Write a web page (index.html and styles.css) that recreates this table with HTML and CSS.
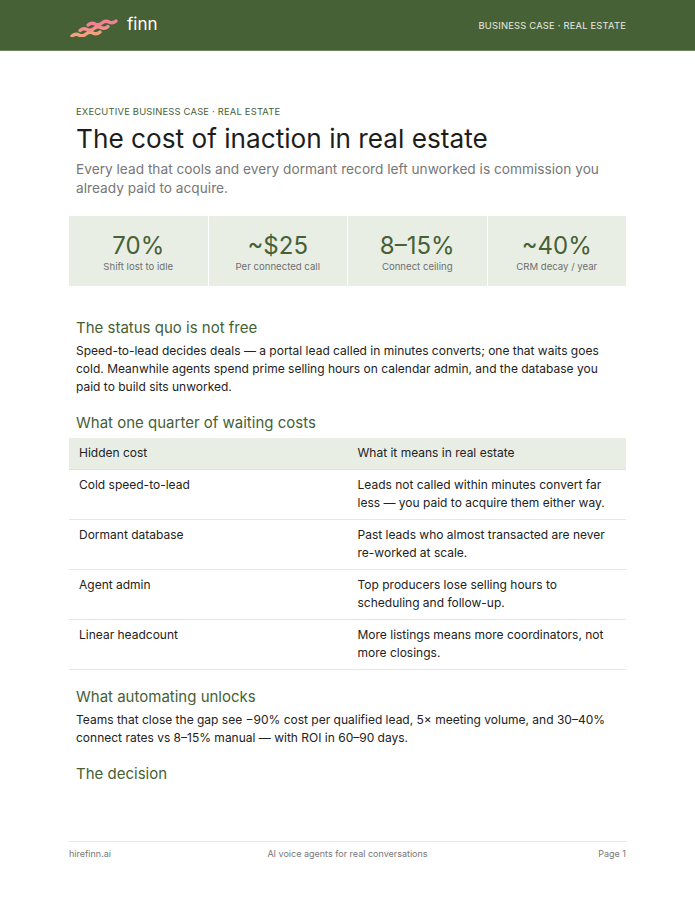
FILE: index.html
```html
<!DOCTYPE html>
<html lang="en">
<head>
<meta charset="utf-8">
<title>The cost of inaction in real estate</title>
<link rel="stylesheet" href="styles.css">
</head>
<body>
<header class="topbar">
  <div class="topbar-inner">
    <div class="brand">
      <svg class="logo" width="54" height="22" viewBox="0 0 54 22" aria-hidden="true">
        <g fill="none" stroke-width="3.4" stroke-linecap="round" stroke-linejoin="round">
          <path stroke="#f3a07f" d="M3 21 q3.5 -3 7 -1 t7 -1 t7 -1 t7 -1"/>
          <path stroke="#f48f8d" d="M11 15.5 q3.5 -3 7 -1 t7 -1 t7 -1 t7 -1"/>
          <path stroke="#f28195" d="M19 10 q3.5 -3 7 -1 t7 -1 t7 -1 t7 -1"/>
        </g>
      </svg>
      <span class="brand-name">finn</span>
    </div>
    <div class="topbar-tag">BUSINESS CASE · REAL ESTATE</div>
  </div>
</header>

<main class="page">
  <p class="eyebrow">EXECUTIVE BUSINESS CASE · REAL ESTATE</p>
  <h1 class="title">The cost of inaction in real estate</h1>
  <p class="lede">Every lead that cools and every dormant record left unworked is commission you already paid to acquire.</p>

  <section class="stats">
    <div class="stat"><div class="stat-num">70%</div><div class="stat-label">Shift lost to idle</div></div>
    <div class="stat"><div class="stat-num">~$25</div><div class="stat-label">Per connected call</div></div>
    <div class="stat"><div class="stat-num">8–15%</div><div class="stat-label">Connect ceiling</div></div>
    <div class="stat"><div class="stat-num">~40%</div><div class="stat-label">CRM decay / year</div></div>
  </section>

  <h2 class="section-title">The status quo is not free</h2>
  <p class="body">Speed-to-lead decides deals — a portal lead called in minutes converts; one that waits goes cold. Meanwhile agents spend prime selling hours on calendar admin, and the database you paid to build sits unworked.</p>

  <h2 class="section-title">What one quarter of waiting costs</h2>
  <table class="costs">
    <thead>
      <tr><th>Hidden cost</th><th>What it means in real estate</th></tr>
    </thead>
    <tbody>
      <tr><td>Cold speed-to-lead</td><td>Leads not called within minutes convert far less — you paid to acquire them either way.</td></tr>
      <tr><td>Dormant database</td><td>Past leads who almost transacted are never re-worked at scale.</td></tr>
      <tr><td>Agent admin</td><td>Top producers lose selling hours to scheduling and follow-up.</td></tr>
      <tr><td>Linear headcount</td><td>More listings means more coordinators, not more closings.</td></tr>
    </tbody>
  </table>

  <h2 class="section-title">What automating unlocks</h2>
  <p class="body">Teams that close the gap see −90% cost per qualified lead, 5× meeting volume, and 30–40% connect rates vs 8–15% manual — with ROI in 60–90 days.</p>

  <h2 class="section-title">The decision</h2>
</main>

<footer class="footer">
  <span class="footer-left">hirefinn.ai</span>
  <span class="footer-mid">AI voice agents for real conversations</span>
  <span class="footer-right">Page 1</span>
</footer>
</body>
</html>
```

FILE: styles.css
```css
* { box-sizing: border-box; }

html, body {
  margin: 0;
  padding: 0;
  background: #ffffff;
}

body {
  font-family: Inter, "Noto Sans", "Liberation Sans", sans-serif;
  color: #222222;
  width: 695px;
  height: 900px;
  display: flex;
  flex-direction: column;
}

.topbar {
  background: #466136;
  border-bottom: 1px solid #6d8460;
  height: 51px;
}

.topbar-inner {
  width: 557px;
  margin: 0 auto;
  height: 50px;
  display: flex;
  align-items: center;
  justify-content: space-between;
}

.brand {
  display: flex;
  align-items: center;
  gap: 4px;
}

.logo {
  display: block;
  margin-top: 1px;
}

.brand-name {
  color: #ffffff;
  font-size: 17px;
  font-weight: 400;
  margin-top: -3px;
}

.topbar-tag {
  color: #e6ebe2;
  font-size: 9.4px;
  letter-spacing: 0.2px;
}

.page {
  width: 557px;
  margin: 0 auto;
  padding-top: 55px;
  flex: 1;
}

.eyebrow {
  margin: 0 7px;
  font-size: 9.4px;
  letter-spacing: 0.2px;
  color: #466136;
  line-height: 12px;
}

.title {
  margin: 4px 7px 0;
  font-size: 26.2px;
  font-weight: 400;
  color: #1d1d1d;
  line-height: 34px;
}

.lede {
  margin: 4px 7px 0;
  font-size: 13.7px;
  line-height: 19px;
  color: #777777;
}

.stats {
  margin-top: 18px;
  margin-bottom: 33px;
  display: grid;
  grid-template-columns: repeat(4, 1fr);
  gap: 1px;
  background: #ffffff;
}

.stat {
  background: #e9eee5;
  height: 70px;
  display: flex;
  flex-direction: column;
  align-items: center;
  justify-content: center;
  padding-top: 3px;
}

.stat-num {
  font-size: 24px;
  color: #466136;
  line-height: 26px;
}

.stat-label {
  font-size: 9.6px;
  color: #6e6e6e;
  line-height: 13px;
  margin-top: 1px;
}

.section-title {
  margin: 18px 7px 0;
  font-size: 15px;
  font-weight: 400;
  color: #466136;
  line-height: 18px;
}

.body {
  margin: 5px 7px 0;
  font-size: 12px;
  line-height: 18px;
  color: #222222;
}

.costs {
  width: 100%;
  border-collapse: collapse;
  margin-top: 6px;
  font-size: 12px;
  table-layout: fixed;
}

.costs th,
.costs td {
  text-align: left;
  vertical-align: top;
  width: 50%;
  padding: 6px 10px;
  line-height: 18px;
}

.costs th {
  background: #e9eee5;
  font-weight: 400;
  color: #222222;
  padding-top: 6px;
  padding-bottom: 7px;
  border-bottom: 1px solid #dde3d8;
}

.costs td {
  border-bottom: 1px solid #e6e6e6;
  padding-bottom: 7px;
  height: 50px;
}

.footer {
  width: 557px;
  margin: 0 auto 40px;
  border-top: 1px solid #e6e6e6;
  padding-top: 6px;
  display: grid;
  grid-template-columns: 1fr auto 1fr;
  font-size: 9px;
  color: #777777;
  line-height: 12px;
}

.footer-right {
  text-align: right;
}
```
